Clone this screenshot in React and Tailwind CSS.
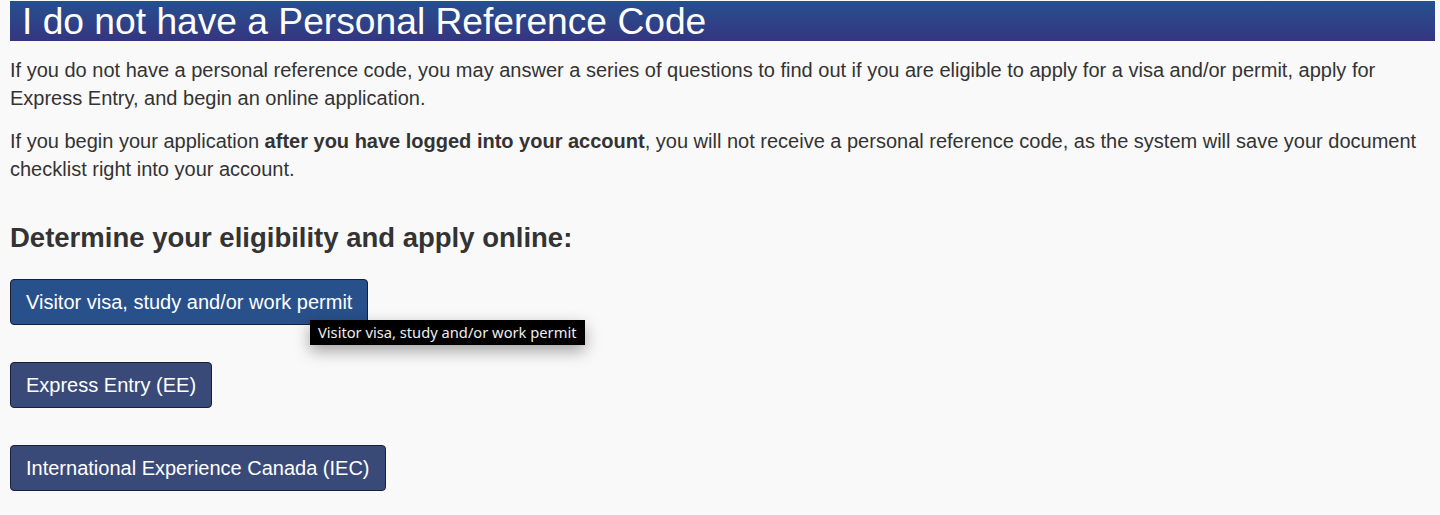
import React from "react";

export default function App() {
  return (
    <div className="min-h-[515px] w-full bg-[#f9f9f9] text-[#333333] font-['Liberation_Sans',Arial,sans-serif] pl-[10px] pr-[5px] pt-px pb-4">
      <h1 className="h-[40px] bg-gradient-to-b from-[#23508f] to-[#343580] text-white font-['Liberation_Sans_Narrow','Liberation_Sans',sans-serif] text-[37.2px] leading-[40px] pl-[12px] whitespace-nowrap overflow-hidden">
        I do not have a Personal Reference Code
      </h1>
      <p className="mt-[15px] text-[20px] leading-[28px]">
        If you do not have a personal reference code, you may answer a series of questions to find out if you are eligible to apply for a visa and/or permit, apply for Express Entry, and begin an online application.
      </p>
      <p className="mt-[15px] text-[20px] leading-[28px]">
        If you begin your application <strong className="font-bold">after you have logged into your account</strong>, you will not receive a personal reference code, as the system will save your document checklist right into your account.
      </p>
      <h2 className="mt-[40px] text-[27.5px] leading-[30px] font-bold">
        Determine your eligibility and apply online:
      </h2>
      <div className="mt-[26px] flex flex-col items-start gap-[37px]">
        <div className="relative">
          <button className="h-[46px] rounded-[4px] border border-[#1b1f3a] bg-[#28508a] px-[15px] text-[20px] text-white">
            Visitor visa, study and/or work permit
          </button>
          <div className="absolute left-[300px] top-[41px] z-10 whitespace-nowrap bg-black px-[8px] py-[3px] text-[14.7px] leading-[19px] text-[#eeeeee] font-['Noto_Sans',sans-serif] shadow-[0_6px_16px_rgba(0,0,0,0.35)]">
            Visitor visa, study and/or work permit
          </div>
        </div>
        <button className="h-[46px] rounded-[4px] border border-[#1b1f3a] bg-[#3a4a78] px-[15px] text-[20px] text-white">
          Express Entry (EE)
        </button>
        <button className="h-[46px] rounded-[4px] border border-[#1b1f3a] bg-[#3a4a78] px-[15px] text-[20px] text-white">
          International Experience Canada (IEC)
        </button>
      </div>
    </div>
  );
}
